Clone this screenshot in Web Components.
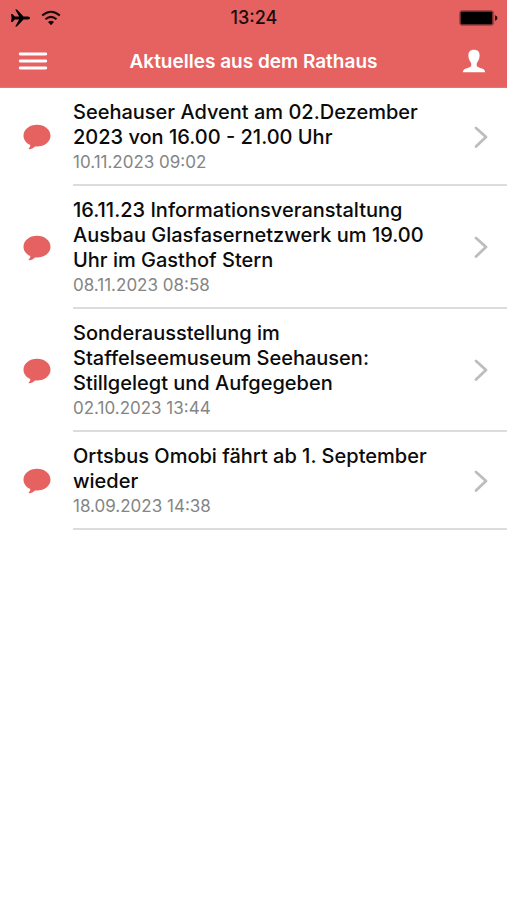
<!DOCTYPE html>
<html lang="de">
<head>
<meta charset="utf-8">
<meta name="viewport" content="width=device-width, initial-scale=1">
<title>Aktuelles aus dem Rathaus</title>
<style>
  body {
    margin: 0;
    background: #fff;
    font-family: Inter, "Liberation Sans", sans-serif;
    --brand: #e56261;
  }
</style>
</head>
<body>
<news-app></news-app>

<script>
class StatusBar extends HTMLElement {
  constructor() {
    super();
    this.attachShadow({ mode: "open" });
    this.shadowRoot.innerHTML = `
      <style>
        :host {
          display: grid;
          grid-template-columns: 1fr auto 1fr;
          align-items: center;
          height: 35px;
          padding: 0 9px 0 10px;
          color: #1b0b0b;
          font-size: 18px;
          font-weight: 500;
          line-height: 20px;
        }
        .left {
          display: flex;
          align-items: center;
          gap: 11px;
        }
        .battery {
          justify-self: end;
        }
        svg {
          display: block;
        }
      </style>
      <div class="left">
        <svg width="20" height="18" viewBox="0 0 20 18" aria-label="Flugmodus">
          <path d="M1 5h1.500l2.300 2.500 4.400.1L5.200.5h1.700l6.600 7.100h4.400c1.300 0 2.100.8 2.100 1.400s-.8 1.400-2.100 1.400h-4.400l-6.600 7.100H5.200l4-7.100-4.400.1L2.500 13H1l.6-4z" fill="#000"/>
        </svg>
        <svg width="20" height="16" viewBox="0 0 20 16" aria-label="WLAN">
          <g fill="none" stroke="#160505" stroke-width="2">
            <path d="M1.200 5.600Q10-2.200 18.800 5.600"/>
            <path d="M4.500 9.300q5.500-4.800 11 0"/>
          </g>
          <path d="M10 15.200l-3-3.300q3-2.500 6 0z" fill="#160505"/>
        </svg>
      </div>
      <slot></slot>
      <svg class="battery" width="39" height="16" viewBox="0 0 39 16" aria-label="Akku">
        <rect x=".7" y=".7" width="34" height="14.600" rx="2.500" fill="none" stroke="#9c3c3c"/>
        <rect x="1.500" y="1.500" width="32" height="13" rx="1" fill="#000"/>
        <path d="M36 5.200q2.500.5 2.500 2.800T36 10.800z" fill="#2a0c0c"/>
      </svg>
    `;
  }
}

class NavBar extends HTMLElement {
  constructor() {
    super();
    this.attachShadow({ mode: "open" });
    this.shadowRoot.innerHTML = `
      <style>
        :host {
          display: flex;
          align-items: center;
          justify-content: space-between;
          height: 53px;
          padding: 0 17px;
          box-sizing: border-box;
          border-bottom: 1px solid #c98080;
          color: #fff;
        }
        h1 {
          margin: 0;
          font-size: 19px;
          font-weight: 600;
          line-height: 25px;
        }
        button {
          display: flex;
          align-items: center;
          justify-content: center;
          width: 32px;
          height: 32px;
          padding: 0;
          border: none;
          background: none;
          color: inherit;
          cursor: pointer;
        }
      </style>
      <button type="button" aria-label="Menü">
        <svg width="30" height="20" viewBox="0 0 30 20">
          <path d="M2.200 3h25.600M2.200 10h25.600M2.200 17h25.600" stroke="currentColor" stroke-width="2.800" stroke-linecap="round"/>
        </svg>
      </button>
      <h1><slot></slot></h1>
      <button type="button" aria-label="Profil">
        <svg width="24" height="24" viewBox="0 0 24 24">
          <path d="M12 .8c3.700 0 5.600 2.200 5.600 5.500 0 2.600-.8 5-2.100 6.700-.8 1.100-.9 2.200-.8 3.300.2 1.600 1.300 2.100 4.200 2.900 2.800.8 4 1.500 4.300 4H.8c.3-2.500 1.500-3.200 4.300-4 2.900-.8 4-1.300 4.200-2.900.1-1.100 0-2.200-.8-3.300-1.300-1.700-2.100-4.100-2.100-6.700C6.400 3 8.300.8 12 .8z" fill="currentColor"/>
        </svg>
      </button>
    `;
  }
}

class NewsItem extends HTMLElement {
  constructor() {
    super();
    this.attachShadow({ mode: "open" });
    this.shadowRoot.innerHTML = `
      <style>
        :host {
          display: block;
        }
        a {
          display: flex;
          align-items: stretch;
          color: #0b0b0b;
          text-decoration: none;
        }
        .icon {
          display: flex;
          align-items: center;
          justify-content: center;
          flex: none;
          width: 73px;
          color: var(--brand);
        }
        .body {
          display: flex;
          align-items: center;
          flex: 1;
          gap: 32px;
          padding: 12px 18px 9px 0;
          border-bottom: 2px solid #dcdcdc;
        }
        .text {
          flex: 1;
        }
        .title {
          display: block;
          font-size: 20px;
          font-weight: 500;
          line-height: 25px;
        }
        .date {
          display: block;
          color: #858585;
          font-size: 17px;
          line-height: 25px;
        }
        .chevron {
          flex: none;
        }
      </style>
      <a href="#">
        <span class="icon">
          <svg width="28" height="26" viewBox="0 0 28 26">
            <path d="M14 .8c7.500 0 13.500 4.800 13.500 10.900S21.500 22.500 14 22.500c-.7 0-1.400 0-2-.1-1.600 1.500-3.500 2.600-6 2.900-.6.100-.6-.4-.2-.7.9-.8 1.500-1.900 1.500-3.500C3.300 19.200.5 15.800.5 11.700.5 5.600 6.500.8 14 .8z" fill="currentColor"/>
          </svg>
        </span>
        <span class="body">
          <span class="text">
            <span class="title"><slot></slot></span>
            <time class="date"><slot name="date"></slot></time>
          </span>
          <svg class="chevron" width="16" height="24" viewBox="0 0 16 24">
            <path d="M3 2l10 9-10 9.500" fill="none" stroke="#bdbdbd" stroke-width="2.800" stroke-linecap="round" stroke-linejoin="round"/>
          </svg>
        </span>
      </a>
    `;
  }
}

class NewsApp extends HTMLElement {
  constructor() {
    super();
    this.attachShadow({ mode: "open" });
    this.shadowRoot.innerHTML = `
      <style>
        :host {
          display: block;
          min-height: 100vh;
        }
        header {
          background: var(--brand);
        }
      </style>
      <header>
        <status-bar>13:24</status-bar>
        <nav-bar>Aktuelles aus dem Rathaus</nav-bar>
      </header>
      <main>
        <news-item>Seehauser Advent am 02.Dezember 2023 von 16.00 - 21.00 Uhr<span slot="date">10.11.2023 09:02</span></news-item>
        <news-item>16.11.23 Informationsveranstaltung Ausbau Glasfasernetzwerk um 19.00 Uhr im Gasthof Stern<span slot="date">08.11.2023 08:58</span></news-item>
        <news-item>Sonderausstellung im Staffelseemuseum Seehausen: Stillgelegt und Aufgegeben<span slot="date">02.10.2023 13:44</span></news-item>
        <news-item>Ortsbus Omobi fährt ab 1. September wieder<span slot="date">18.09.2023 14:38</span></news-item>
      </main>
    `;
  }
}

customElements.define("status-bar", StatusBar);
customElements.define("nav-bar", NavBar);
customElements.define("news-item", NewsItem);
customElements.define("news-app", NewsApp);
</script>
</body>
</html>
